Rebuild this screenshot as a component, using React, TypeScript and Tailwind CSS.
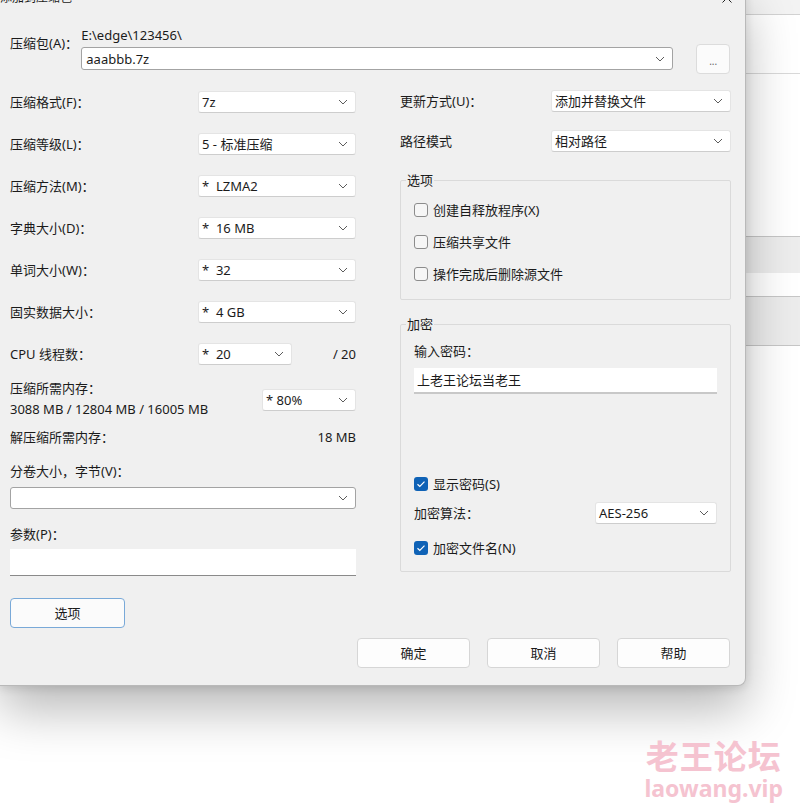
import React from 'react';

const Chevron: React.FC = () => (
  <svg width="10" height="6" viewBox="0 0 10 6" fill="none">
    <path d="M1 1l4 4 4-4" stroke="#5c5c5c" strokeWidth="1" />
  </svg>
);

const Combo: React.FC<{ value?: string; className?: string; strong?: boolean }> = ({ value = '', className = '', strong }) => (
  <div
    className={`flex items-center justify-between h-[22px] bg-white rounded-[3px] pl-[3px] pr-[7px] border ${
      strong ? 'border-[#a3a3a3]' : 'border-[#e4e4e4] border-b-[#cdcdcd]'
    } ${className}`}
  >
    <span className="whitespace-pre">{value}</span>
    <Chevron />
  </div>
);

const Check: React.FC<{ checked?: boolean; label: string; className?: string }> = ({ checked, label, className = '' }) => (
  <div className={`flex items-center gap-[5px] h-[16px] ${className}`}>
    {checked ? (
      <span className="w-[14px] h-[14px] rounded-[3px] bg-[#0f62b6] flex items-center justify-center">
        <svg width="10" height="8" viewBox="0 0 10 8" fill="none">
          <path d="M1.5 4.2l2.3 2.2L8.5 1.6" stroke="#fff" strokeWidth="1.2" />
        </svg>
      </span>
    ) : (
      <span className="w-[14px] h-[14px] rounded-[3px] border border-[#8c8c8c] bg-[#f6f6f6]" />
    )}
    <span>{label}</span>
  </div>
);

const Row: React.FC<{ label: string; value: string }> = ({ label, value }) => (
  <div className="flex items-center h-[22px]">
    <span className="w-[188px]">{label}</span>
    <Combo value={value} className="w-[158px]" />
  </div>
);

const Button: React.FC<{ children: React.ReactNode; className?: string }> = ({ children, className = '' }) => (
  <button className={`h-[30px] w-[113px] rounded-[4px] bg-[#fdfdfd] border border-[#d6d6d6] text-[13px] ${className}`}>
    {children}
  </button>
);

export default function App() {
  return (
    <div
      className="relative w-[800px] h-[808px] overflow-hidden bg-white text-[#1b1b1b]"
      style={{ fontFamily: '"Noto Sans", "Noto Sans CJK SC", sans-serif' }}
    >
      {/* window behind the dialog */}
      <div className="flex flex-col">
        <div className="h-[15px] bg-[#f3f3f3] border-b border-[#d2d2d2]" />
        <div className="h-[59px] bg-white border-b border-[#d9d9d9]" />
        <div className="h-[163px] bg-white border-b border-[#c6c6c6]" />
        <div className="h-[36px] bg-[#ededed]" />
        <div className="h-[24px] bg-white border-b border-[#c6c6c6]" />
        <div className="h-[49px] bg-[#ececec] border-b border-[#c6c6c6]" />
        <div className="flex-1 bg-white" />
      </div>

      {/* dialog */}
      <div className="absolute left-0 top-[-14px] w-[746px] h-[700px] bg-[#f0f0f0] rounded-br-[8px] border-r border-b border-[#b9b9b9] shadow-[0_24px_50px_rgba(0,0,0,0.28),0_2px_10px_rgba(0,0,0,0.12)] text-[13px] leading-[16px]">
        <div className="h-[24px] flex items-center justify-between pr-[13px] text-[12px]">
          <span>添加到压缩包</span>
          <svg width="10" height="10" viewBox="0 0 10 10" fill="none">
            <path d="M0.5 0.5l9 9M9.5 0.5l-9 9" stroke="#222" strokeWidth="1" />
          </svg>
        </div>

        <div className="pl-[10px] pr-[15px] pt-[17px]">
          {/* archive */}
          <div className="flex items-start">
            <span className="w-[72px] pt-[8px]">压缩包(A)：</span>
            <div className="flex flex-col">
              <span className="h-[16px]">E:\edge\123456\</span>
              <Combo value="aaabbb.7z" strong className="mt-[4px] w-[592px] h-[23px] pl-[4px]" />
            </div>
            <button className="ml-[23px] mt-[17px] w-[34px] h-[30px] rounded-[4px] bg-[#fbfbfb] border border-[#dcdcdc] text-[10px] text-[#666] pt-[4px]">
              ...
            </button>
          </div>

          <div className="flex items-start gap-[44px] mt-[16px]">
            {/* left column */}
            <div className="w-[346px] flex flex-col pt-[1px]">
              <div className="flex flex-col gap-[20px]">
                <Row label="压缩格式(F)：" value="7z" />
                <Row label="压缩等级(L)：" value="5 - 标准压缩" />
                <Row label="压缩方法(M)：" value="*  LZMA2" />
                <Row label="字典大小(D)：" value="*  16 MB" />
                <Row label="单词大小(W)：" value="*  32" />
                <Row label="固实数据大小：" value="*  4 GB" />
                <div className="flex items-center h-[22px]">
                  <span className="w-[188px]">CPU 线程数：</span>
                  <Combo value="*  20" className="w-[94px]" />
                  <span className="ml-auto">/ 20</span>
                </div>
              </div>

              <div className="flex justify-between mt-[15px]">
                <div className="flex flex-col gap-[5px]">
                  <span>压缩所需内存：</span>
                  <span>3088 MB / 12804 MB / 16005 MB</span>
                </div>
                <Combo value="* 80%" className="w-[94px] mt-[9px]" />
              </div>

              <div className="flex justify-between mt-[12px]">
                <span>解压缩所需内存：</span>
                <span>18 MB</span>
              </div>

              <span className="mt-[18px]">分卷大小，字节(V)：</span>
              <Combo strong className="mt-[8px] w-[346px]" />

              <span className="mt-[17px]">参数(P)：</span>
              <div className="mt-[7px] h-[27px] bg-white border-b border-[#8a8a8a]" />

              <button className="mt-[22px] w-[115px] h-[30px] rounded-[4px] bg-[#fbfbfb] border border-[#79a9d8] text-[13px]">
                选项
              </button>
            </div>

            {/* right column */}
            <div className="w-[331px] flex flex-col">
              <div className="flex items-center h-[22px]">
                <span className="w-[151px]">更新方式(U)：</span>
                <Combo value="添加并替换文件" className="w-[180px]" />
              </div>
              <div className="flex items-center h-[22px] mt-[18px]">
                <span className="w-[151px]">路径模式</span>
                <Combo value="相对路径" className="w-[180px]" />
              </div>

              <fieldset className="mt-[20px] border border-[#dadada] rounded-[2px] px-[13px] pb-[17px]">
                <legend className="ml-[-8px] px-[1px] h-[16px]">选项</legend>
                <div className="flex flex-col gap-[16px] pt-[14px]">
                  <Check label="创建自释放程序(X)" />
                  <Check label="压缩共享文件" />
                  <Check label="操作完成后删除源文件" />
                </div>
              </fieldset>

              <fieldset className="mt-[16px] border border-[#dadada] rounded-[2px] px-[13px] pb-[15px]">
                <legend className="ml-[-8px] px-[1px] h-[16px]">加密</legend>
                <div className="flex flex-col pt-[11px]">
                  <span>输入密码：</span>
                  <div className="mt-[9px] h-[26px] bg-white border-b-2 border-[#c8c8c8] flex items-center pl-[3px]">
                    上老王论坛当老王
                  </div>
                  <Check checked label="显示密码(S)" className="mt-[82px]" />
                  <div className="flex items-center h-[22px] mt-[10px]">
                    <span className="w-[181px]">加密算法：</span>
                    <Combo value="AES-256" className="w-[122px]" />
                  </div>
                  <Check checked label="加密文件名(N)" className="mt-[16px]" />
                </div>
              </fieldset>
            </div>
          </div>

          <div className="flex justify-end gap-[17px] mt-[10px]">
            <Button>确定</Button>
            <Button>取消</Button>
            <Button>帮助</Button>
          </div>
        </div>
      </div>

      {/* watermark */}
      <div className="absolute right-[17px] bottom-[8px] flex flex-col items-center gap-[4px] text-[#f5c3d0] font-bold">
        <span className="text-[33px] leading-[33px] tracking-[1px]" style={{ fontFamily: '"Noto Sans CJK SC", sans-serif' }}>
          老王论坛
        </span>
        <span className="text-[23px] leading-[24px]">laowang.vip</span>
      </div>
    </div>
  );
}
